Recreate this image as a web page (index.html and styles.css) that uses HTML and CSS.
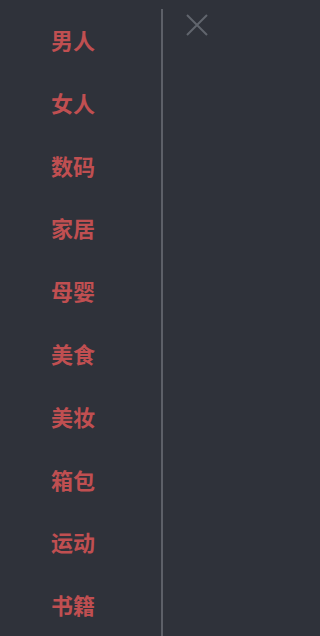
FILE: index.html
```html
<!DOCTYPE html>
<html lang="zh">
<head>
<meta charset="utf-8">
<link rel="stylesheet" href="styles.css">
</head>
<body>
<div class="drawer">
  <ul class="menu">
    <li>男人</li>
    <li>女人</li>
    <li>数码</li>
    <li>家居</li>
    <li>母婴</li>
    <li>美食</li>
    <li>美妆</li>
    <li>箱包</li>
    <li>运动</li>
    <li>书籍</li>
  </ul>
  <div class="divider"></div>
  <div class="side">
    <button class="close" aria-label="关闭">
      <svg width="22" height="22" viewBox="0 0 22 22"><path d="M1 1 L21 21 M21 1 L1 21" stroke="#61656d" stroke-width="2" fill="none"/></svg>
    </button>
  </div>
</div>
</body>
</html>
```
FILE: styles.css
```css
html, body {
  margin: 0;
  padding: 0;
  height: 100%;
  background: #2f323a;
}
.drawer {
  display: flex;
  height: 636px;
  overflow: hidden;
}
.menu {
  list-style: none;
  margin: 0;
  padding: 8px 0 0 51px;
  width: 110px;
}
.menu li {
  height: 62.8px;
  line-height: 62.8px;
  font-family: "Noto Sans CJK SC", sans-serif;
  font-weight: 700;
  font-size: 22px;
  color: #c04f51;
  white-space: nowrap;
}
.divider {
  width: 2px;
  margin-top: 9px;
  background: #5d6068;
}
.side {
  flex: 1;
  padding: 14px 0 0 23px;
}
.close {
  display: block;
  padding: 0;
  border: 0;
  background: none;
  width: 22px;
  height: 22px;
}
.close svg {
  display: block;
}
```
